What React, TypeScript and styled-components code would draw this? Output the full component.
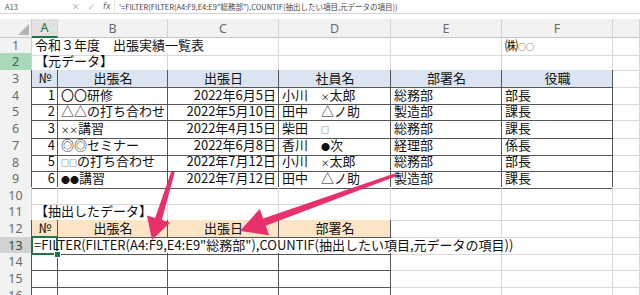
import React from 'react';
import styled, { createGlobalStyle } from 'styled-components';

const GlobalStyle = createGlobalStyle`
  html, body { margin: 0; padding: 0; background: #fff; }
  body { font-family: "Noto Sans CJK JP", "Noto Sans", sans-serif; }
  #root { width: 640px; height: 295px; }
`;

const COLS = '32px 26px 110px 111px 112px 111px 111px 1fr';
const GRID = '#d9d9d9';
const DARK = '#555555';
const GREEN = '#217346';
const BLUE = '#dbe5f1';
const BEIGE = '#fbe5c6';

type Edge = 'g' | 'd' | 'n';
type Align = 'l' | 'r' | 'c';

const edgeColor = (e: Edge) => (e === 'd' ? DARK : e === 'g' ? GRID : 'transparent');

const Page = styled.div`
  position: relative;
  width: 640px;
  height: 295px;
  overflow: hidden;
  background: #fff;
`;

const FormulaBar = styled.div`
  display: flex;
  align-items: center;
  height: 13px;
  border-bottom: 1px solid #d4d4d4;
  background: #fff;
  color: #555;
`;

const NameBox = styled.div`
  width: 60px;
  height: 100%;
  box-sizing: border-box;
  padding-left: 5px;
  display: flex;
  align-items: center;
  font-size: 7.5px;
  color: #555;
`;

const BarIcons = styled.div`
  display: flex;
  align-items: center;
  gap: 8px;
  width: 55px;
  height: 100%;
  box-sizing: border-box;
  padding-left: 12px;
  font-size: 9px;
  border-right: 1px solid #e4e4e4;
`;

const BarIcon = styled.span<{ $dim?: boolean }>`
  color: ${(p) => (p.$dim ? '#b8b8b8' : '#666')};
  font-style: ${(p) => (p.$dim ? 'normal' : 'italic')};
  font-family: "DejaVu Sans", sans-serif;
  font-size: ${(p) => (p.$dim ? '9px' : '8px')};
`;

const FormulaText = styled.div`
  padding-left: 4px;
  font-size: 7.5px;
  color: #444;
  white-space: nowrap;
`;

const Gap = styled.div`
  height: 5px;
  background: #fff;
`;

const HeaderRow = styled.div`
  display: grid;
  grid-template-columns: ${COLS};
  height: 17.7px;
  background: #f2f2f2;
`;

const Corner = styled.div`
  position: relative;
  box-sizing: border-box;
  border-right: 1px solid #cfcfcf;
  border-bottom: 1px solid #c6c6c6;
  &::after {
    content: '';
    position: absolute;
    right: 2px;
    bottom: 2px;
    border-style: solid;
    border-width: 0 0 11px 11px;
    border-color: transparent transparent #b4b4b4 transparent;
  }
`;

const ColHead = styled.div<{ $active?: boolean }>`
  box-sizing: border-box;
  display: flex;
  align-items: center;
  justify-content: center;
  font-family: "Noto Sans", sans-serif;
  font-size: 12.5px;
  color: ${(p) => (p.$active ? GREEN : '#6a6a6a')};
  background: ${(p) => (p.$active ? '#e1e1e1' : 'transparent')};
  border-right: 1px solid #d4d4d4;
  border-bottom: ${(p) => (p.$active ? `2px solid ${GREEN}` : '1px solid #c6c6c6')};
`;

const SheetRow = styled.div`
  display: grid;
  grid-template-columns: ${COLS};
  height: 16.67px;
`;

const RowHead = styled.div<{ $state?: 'sel' | 'hl'; $edge?: boolean }>`
  box-sizing: border-box;
  display: flex;
  align-items: center;
  justify-content: center;
  font-family: "Noto Sans", sans-serif;
  font-size: 12.5px;
  color: ${(p) => (p.$state === 'hl' ? '#2f6b4c' : p.$state === 'sel' ? '#2c4f3c' : '#6a6a6a')};
  background: ${(p) => (p.$state === 'hl' ? '#a9d8bb' : p.$state === 'sel' ? '#d2d2d2' : '#f2f2f2')};
  border-right: 1px solid ${(p) => (p.$edge ? DARK : '#cfcfcf')};
  border-bottom: 1px solid #dadada;
`;

const CellBox = styled.div<{ $r: Edge; $b: Edge; $align: Align; $bg?: string; $sel?: boolean }>`
  position: relative;
  box-sizing: border-box;
  min-width: 0;
  padding: 0 2px 0 3px;
  font-size: 13px;
  line-height: 16px;
  color: #111;
  white-space: nowrap;
  overflow: visible;
  text-align: ${(p) => (p.$align === 'r' ? 'right' : p.$align === 'c' ? 'center' : 'left')};
  background: ${(p) => p.$bg ?? 'transparent'};
  border-right: 1px solid ${(p) => edgeColor(p.$r)};
  border-bottom: 1px solid ${(p) => edgeColor(p.$b)};
  ${(p) =>
    p.$sel
      ? `&::after {
      content: '';
      position: absolute;
      left: -1px; top: -1px; right: -1px; bottom: -1px;
      border: 2px solid ${GREEN};
      z-index: 2;
    }`
      : ''}
`;

const OverText = styled.span`
  position: relative;
  z-index: 1;
`;

const FormulaCellText = styled.span`
  position: relative;
  z-index: 3;
  margin-left: -1px;
`;

const Small = styled.span<{ $size: number }>`
  font-size: ${(p) => p.$size}px;
`;

const Handle = styled.span`
  position: absolute;
  right: -4px;
  bottom: -4px;
  width: 5px;
  height: 5px;
  background: ${GREEN};
  border: 1px solid #fff;
  z-index: 4;
`;

const Overlay = styled.svg`
  position: absolute;
  left: 0;
  top: 0;
  pointer-events: none;
  z-index: 10;
`;

interface CellSpec {
  t?: React.ReactNode;
  a?: Align;
  r?: Edge;
  b?: Edge;
  bg?: string;
  sel?: boolean;
}

interface RowSpec {
  n: number;
  state?: 'sel' | 'hl';
  edge?: boolean;
  cells: CellSpec[];
}

const g: CellSpec = {};
const box = (t?: React.ReactNode, a: Align = 'l', bg?: string): CellSpec => ({ t, a, r: 'd', b: 'd', bg });

const dataRows: [string, React.ReactNode, string, React.ReactNode, string, string][] = [
  ['1', '〇〇研修', '2022年6月5日', <>小川　<Small $size={8.5}>×</Small>太郎</>, '総務部', '部長'],
  ['2', '△△の打ち合わせ', '2022年5月10日', '田中　△ノ助', '製造部', '課長'],
  ['3', <><Small $size={8.5}>××</Small>講習</>, '2022年4月15日', <>柴田　<Small $size={8}>□</Small></>, '総務部', '課長'],
  ['4', '◎◎セミナー', '2022年6月8日', <>香川　<Small $size={9}>●</Small>次</>, '経理部', '係長'],
  ['5', <><Small $size={8}>□□</Small>の打ち合わせ</>, '2022年7月12日', <>小川　<Small $size={8.5}>×</Small>太郎</>, '総務部', '部長'],
  ['6', <><Small $size={9}>●●</Small>講習</>, '2022年7月12日', '田中　△ノ助', '製造部', '課長'],
];

const FORMULA = '=FILTER(FILTER(A4:F9,E4:E9"総務部"),COUNTIF(抽出したい項目,元データの項目))';

const rows: RowSpec[] = [
  {
    n: 1,
    cells: [
      { t: <OverText>令和３年度　出張実績一覧表</OverText>, r: 'n' },
      { r: 'n' },
      g,
      g,
      g,
      { t: <>㈱<Small $size={8}>○○</Small></> },
      g,
    ],
  },
  {
    n: 2,
    state: 'hl',
    cells: [
      { t: <OverText>【元データ】</OverText>, r: 'n', b: 'd' },
      { b: 'd' },
      { b: 'd' },
      { b: 'd' },
      { b: 'd' },
      { b: 'd' },
      g,
    ],
  },
  {
    n: 3,
    edge: true,
    cells: [
      box('№', 'c', BLUE),
      box('出張名', 'c', BLUE),
      box('出張日', 'c', BLUE),
      box('社員名', 'c', BLUE),
      box('部署名', 'c', BLUE),
      box('役職', 'c', BLUE),
      g,
    ],
  },
  ...dataRows.map((d, i) => ({
    n: 4 + i,
    edge: true,
    cells: [box(d[0], 'r'), box(d[1]), box(d[2], 'r'), box(d[3]), box(d[4]), box(d[5]), g],
  })),
  { n: 10, cells: [g, g, g, g, g, g, g] },
  {
    n: 11,
    cells: [
      { t: <OverText>【抽出したデータ】</OverText>, r: 'n', b: 'd' },
      { b: 'd' },
      { b: 'd' },
      { b: 'd' },
      g,
      g,
      g,
    ],
  },
  {
    n: 12,
    edge: true,
    cells: [box('№', 'c', BEIGE), box('出張名', 'c', BEIGE), box('出張日', 'c', BEIGE), box('部署名', 'c', BEIGE), g, g, g],
  },
  {
    n: 13,
    edge: true,
    state: 'sel',
    cells: [
      {
        t: (
          <>
            <FormulaCellText>{FORMULA}</FormulaCellText>
            <Handle />
          </>
        ),
        sel: true,
        r: 'n',
        b: 'd',
      },
      { r: 'n', b: 'd' },
      { r: 'n', b: 'd' },
      { r: 'n', b: 'd' },
      { r: 'n' },
      g,
      g,
    ],
  },
  { n: 14, edge: true, cells: [box(), box(), box(), box(), g, g, g] },
  { n: 15, edge: true, cells: [box(), box(), box(), box(), g, g, g] },
  { n: 16, edge: true, cells: [box(), box(), box(), box(), g, g, g] },
];

function arrowPoints(
  x1: number,
  y1: number,
  x2: number,
  y2: number,
  headLen: number,
  headHalf: number,
  tailW: number,
  neckW: number,
): string {
  const dx = x2 - x1;
  const dy = y2 - y1;
  const len = Math.hypot(dx, dy);
  const ux = dx / len;
  const uy = dy / len;
  const nx = -uy;
  const ny = ux;
  const bx = x2 - ux * headLen;
  const by = y2 - uy * headLen;
  const pts: [number, number][] = [
    [x1 + (nx * tailW) / 2, y1 + (ny * tailW) / 2],
    [bx + (nx * neckW) / 2, by + (ny * neckW) / 2],
    [bx + nx * headHalf, by + ny * headHalf],
    [x2, y2],
    [bx - nx * headHalf, by - ny * headHalf],
    [bx - (nx * neckW) / 2, by - (ny * neckW) / 2],
    [x1 - (nx * tailW) / 2, y1 - (ny * tailW) / 2],
  ];
  return pts.map(([x, y]) => `${x.toFixed(1)},${y.toFixed(1)}`).join(' ');
}

const Arrows: React.FC = () => (
  <Overlay width={640} height={295} viewBox="0 0 640 295">
    <polygon points={arrowPoints(173, 172, 152, 240, 22, 12, 3.5, 7)} fill="#e8306b" />
    <polygon points={arrowPoints(395, 175, 240, 231, 26, 14, 3.5, 7.5)} fill="#e8306b" />
  </Overlay>
);

export default function App() {
  return (
    <>
      <GlobalStyle />
      <Page>
        <FormulaBar>
          <NameBox>A13</NameBox>
          <BarIcons>
            <BarIcon $dim>✕</BarIcon>
            <BarIcon $dim>✓</BarIcon>
            <BarIcon>fx</BarIcon>
          </BarIcons>
          <FormulaText>'{FORMULA}</FormulaText>
        </FormulaBar>
        <Gap />
        <HeaderRow>
          <Corner />
          <ColHead $active>A</ColHead>
          <ColHead>B</ColHead>
          <ColHead>C</ColHead>
          <ColHead>D</ColHead>
          <ColHead>E</ColHead>
          <ColHead>F</ColHead>
          <ColHead />
        </HeaderRow>
        {rows.map((row) => (
          <SheetRow key={row.n}>
            <RowHead $state={row.state} $edge={row.edge}>
              {row.n}
            </RowHead>
            {row.cells.map((c, i) => (
              <CellBox
                key={i}
                $r={c.r ?? 'g'}
                $b={c.b ?? 'g'}
                $align={c.a ?? 'l'}
                $bg={c.bg}
                $sel={c.sel}
              >
                {c.t}
              </CellBox>
            ))}
          </SheetRow>
        ))}
        <Arrows />
      </Page>
    </>
  );
}
